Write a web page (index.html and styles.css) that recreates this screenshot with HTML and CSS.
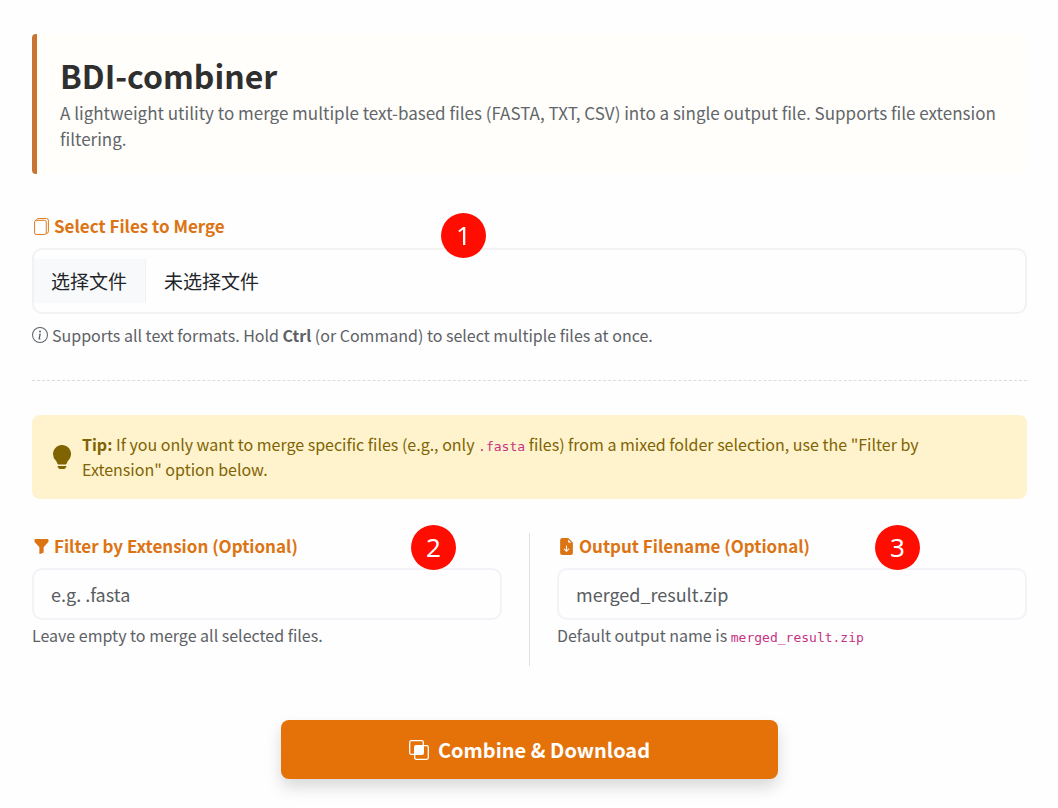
FILE: index.html
```html
<!DOCTYPE html>
<html lang="en">
<head>
<meta charset="utf-8">
<meta name="viewport" content="width=device-width, initial-scale=1">
<title>BDI-combiner</title>
<link rel="stylesheet" href="styles.css">
</head>
<body>
<main class="page">
  <header class="intro">
    <h1 class="intro-title">BDI-combiner</h1>
    <p class="intro-text">A lightweight utility to merge multiple text-based files (FASTA, TXT, CSV) into a single output file. Supports file extension filtering.</p>
  </header>

  <form class="form">
    <section class="field">
      <label class="label" for="files">
        <svg class="icon icon-label" viewBox="0 0 16 16" aria-hidden="true"><path d="M3.500 2v-.2A1.500 1.500 0 0 1 5 .5h7.800a1.700 1.700 0 0 1 1.700 1.700v10.600a1.500 1.500 0 0 1-1.500 1.500h-.5M3 2.200h8a1.500 1.500 0 0 1 1.500 1.500V14a1.500 1.500 0 0 1-1.500 1.500H3A1.500 1.500 0 0 1 1.500 14V3.700A1.500 1.500 0 0 1 3 2.200z" fill="none" stroke="currentColor" stroke-width=".9"/></svg>
        Select Files to Merge
      </label>
      <div class="file-box">
        <input class="file-input" type="file" id="files" multiple>
        <span class="file-button" lang="zh-CN">选择文件</span>
        <span class="file-status" lang="zh-CN">未选择文件</span>
      </div>
      <p class="help">
        <svg class="icon" viewBox="0 0 16 16" fill="currentColor" aria-hidden="true"><path d="M8 15A7 7 0 1 1 8 1a7 7 0 0 1 0 14m0 1A8 8 0 1 0 8 0a8 8 0 0 0 0 16"/><path d="m8.930 6.588-2.290.287-.082.380.450.083c.294.070.352.176.288.469l-.738 3.468c-.194.897.105 1.319.808 1.319.545 0 1.178-.252 1.465-.598l.088-.416c-.2.176-.492.246-.686.246-.275 0-.375-.193-.304-.533zM9 4.500a1 1 0 1 1-2 0 1 1 0 0 1 2 0"/></svg>
        <span>Supports all text formats. Hold <strong>Ctrl</strong> (or Command) to select multiple files at once.</span>
      </p>
      <span class="badge badge-files">1</span>
    </section>

    <hr class="rule">

    <div class="tip">
      <svg class="tip-icon" viewBox="0 0 16 16" fill="currentColor" aria-hidden="true"><path d="M2 6a6 6 0 1 1 10.174 4.310c-.203.196-.359.400-.453.619l-.762 1.769A.5.5 0 0 1 10.500 13h-5a.5.5 0 0 1-.460-.302l-.761-1.770a2 2 0 0 0-.453-.618A5.980 5.980 0 0 1 2 6m3 8.500a.5.5 0 0 1 .5-.5h5a.5.5 0 0 1 0 1l-.224.447a1 1 0 0 1-.894.553H6.618a1 1 0 0 1-.894-.553L5.500 15a.5.5 0 0 1-.5-.5"/></svg>
      <p class="tip-text"><strong>Tip:</strong> If you only want to merge specific files (e.g., only <code class="code">.fasta</code> files) from a mixed folder selection, use the "Filter by Extension" option below.</p>
    </div>

    <div class="columns">
      <section class="field">
        <label class="label" for="extension">
          <svg class="icon icon-label" viewBox="0 0 16 16" fill="currentColor" aria-hidden="true"><path d="M1.500 1.500A.5.5 0 0 1 2 1h12a.5.5 0 0 1 .5.5v2a.5.5 0 0 1-.128.334L10 8.692V13.500a.5.5 0 0 1-.342.474l-3 1A.5.5 0 0 1 6 14.500V8.692L1.628 3.834A.5.5 0 0 1 1.500 3.500z"/></svg>
          Filter by Extension (Optional)
        </label>
        <input class="text-input" type="text" id="extension" placeholder="e.g. .fasta">
        <p class="help help-near">Leave empty to merge all selected files.</p>
        <span class="badge badge-column badge-extension">2</span>
      </section>
      <div class="divider"></div>
      <section class="field">
        <label class="label" for="output">
          <svg class="icon icon-label" viewBox="0 0 16 16" fill="currentColor" aria-hidden="true"><path d="M9.293 0H4a2 2 0 0 0-2 2v12a2 2 0 0 0 2 2h8a2 2 0 0 0 2-2V4.707A1 1 0 0 0 13.707 4L10 .293A1 1 0 0 0 9.293 0M9.500 3.500v-2l3 3h-2a1 1 0 0 1-1-1m-1 4v3.793l1.146-1.147a.5.5 0 0 1 .708.708l-2 2a.5.5 0 0 1-.708 0l-2-2a.5.5 0 0 1 .708-.708L7.500 11.293V7.500a.5.5 0 0 1 1 0"/></svg>
          Output Filename (Optional)
        </label>
        <input class="text-input" type="text" id="output" placeholder="merged_result.zip">
        <p class="help help-near"><span>Default output name is <code class="code">merged_result.zip</code></span></p>
        <span class="badge badge-column badge-output">3</span>
      </section>
    </div>

    <button class="submit" type="button">
      <svg class="submit-icon" viewBox="0 0 20 20" aria-hidden="true"><rect x="0.700" y="0.700" width="13.600" height="13.600" rx="1.500" fill="none" stroke="currentColor" stroke-width="1.300"/><rect x="5.700" y="5.700" width="13.600" height="13.600" rx="1.500" fill="none" stroke="currentColor" stroke-width="1.300"/><path d="M5.500 5.500h9v9h-9z" fill="currentColor"/></svg>
      Combine &amp; Download
    </button>
  </form>
</main>
</body>
</html>
```

FILE: styles.css
```css
* {
  box-sizing: border-box;
}

body {
  margin: 0;
  background: #fefefe;
  color: #212529;
  font-family: "Noto Sans CJK SC", "Noto Sans", sans-serif;
  font-size: 17px;
  line-height: 26px;
}

h1,
p {
  margin: 0;
}

.page {
  padding: 34px 31px 28px 32px;
}

.intro {
  padding: 19px 23px 22px;
  border-left: 5px solid #c87533;
  border-radius: 4px;
  background: #fffefb;
}

.intro-title {
  margin-bottom: 3px;
  color: #2f2f2f;
  font-size: 32px;
  line-height: 44px;
}

.intro-text {
  color: #62666a;
}

.form {
  display: flex;
  flex-direction: column;
  padding-top: 39px;
}

.field {
  position: relative;
  display: flex;
  flex-direction: column;
  min-width: 0;
}

.label {
  display: flex;
  align-items: center;
  gap: 4px;
  margin-bottom: 9px;
  padding-left: 1px;
  color: #dc7414;
  font-weight: 700;
}

.icon {
  flex: none;
  width: 16px;
  height: 16px;
}

.icon-label {
  width: 17px;
  height: 17px;
}

.file-box {
  position: relative;
  display: flex;
  align-items: center;
  padding: 9px 0;
  border: 2px solid #f3f2f3;
  border-radius: 10px;
  font-size: 19px;
}

.file-input {
  position: absolute;
  inset: 0;
  width: 100%;
  opacity: 0;
  cursor: pointer;
}

.file-button {
  padding: 9px 18px 9px 17px;
  border-right: 1px solid #f1f2f4;
  background: #f8f9fa;
}

.file-status {
  padding: 9px 18px;
}

.help {
  display: flex;
  align-items: center;
  gap: 4px;
  margin-top: 8px;
  color: #5d6166;
  font-size: 16px;
}

.help-near {
  margin-top: 2px;
}

.rule {
  width: 100%;
  margin: 32px 0 34px;
  border: 0;
  border-top: 1px dashed #dcdcdc;
}

.tip {
  display: flex;
  align-items: center;
  gap: 8px;
  padding: 17px 36px 17px 18px;
  border-radius: 8px;
  background: #fff3cd;
  color: #806404;
}

.tip-icon {
  flex: none;
  width: 24px;
  height: 24px;
}

.tip-text {
  font-size: 16px;
  line-height: 25px;
}

.code {
  color: #c63384;
  font-family: "DejaVu Sans Mono", monospace;
  font-size: 13px;
  line-height: 20px;
}

.columns {
  display: grid;
  grid-template-columns: 1fr 1px 1fr;
  gap: 27px;
  margin-top: 34px;
}

.divider {
  height: 133px;
  background: #dedfe1;
}

.text-input {
  width: 100%;
  height: 52px;
  padding: 0 17px;
  border: 2px solid #f4f2f6;
  border-radius: 10px;
  background: #fefefe;
  color: #212529;
  font: inherit;
  font-size: 18px;
}

.text-input::placeholder {
  color: #595c5f;
  opacity: 1;
}

.badge {
  position: absolute;
  top: 0;
  left: 409px;
  width: 45px;
  height: 45px;
  border-radius: 50%;
  background: #ff0d00;
  color: #fff;
  font-family: "Noto Sans", sans-serif;
  font-size: 26px;
  line-height: 45px;
  text-align: center;
}

.badge-column {
  top: -8px;
}

.badge-extension {
  left: 379px;
}

.badge-output {
  left: 318px;
}

.submit {
  display: flex;
  align-items: center;
  align-self: center;
  justify-content: center;
  gap: 9px;
  width: 50%;
  margin-top: 54px;
  padding: 16px;
  border: 0;
  border-radius: 8px;
  background: #e47209;
  box-shadow: 0 8px 16px rgba(0, 0, 0, 0.15);
  color: #fff;
  font-family: inherit;
  font-size: 20px;
  font-weight: 700;
  line-height: 27px;
}

.submit-icon {
  width: 20px;
  height: 20px;
}
```
